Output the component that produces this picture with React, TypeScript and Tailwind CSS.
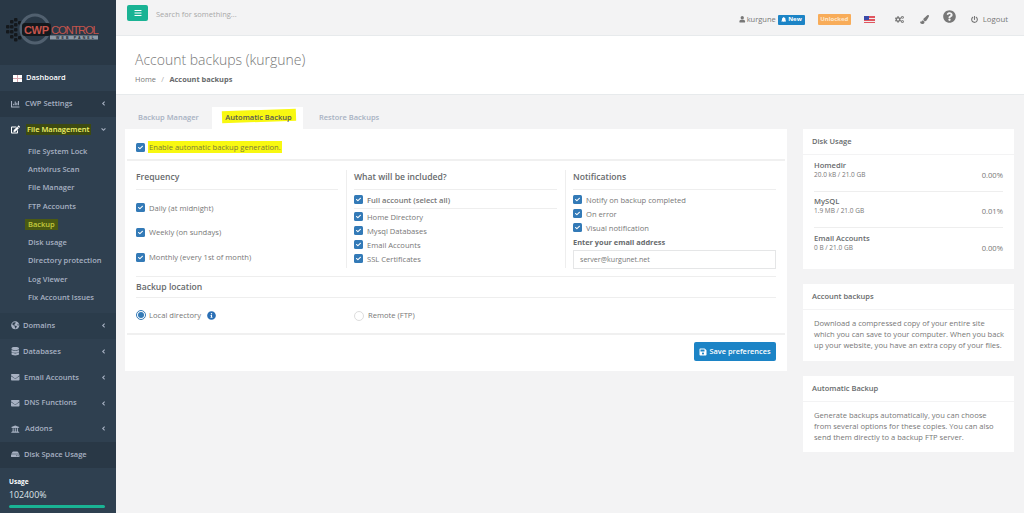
import {
  FaAngleDown,
  FaAngleLeft,
  FaBars,
  FaBell,
  FaChartBar,
  FaCheck,
  FaCogs,
  FaDatabase,
  FaEdit,
  FaEnvelope,
  FaGlobeAmericas,
  FaHdd,
  FaInfoCircle,
  FaPaintBrush,
  FaPowerOff,
  FaQuestionCircle,
  FaSave,
  FaUniversity,
  FaUser,
} from 'react-icons/fa'
import type { ReactNode } from 'react'

function Logo() {
  const dots = [
    [8, 27], [8, 32], [12, 22], [12, 27], [12, 32], [12, 37], [16, 20], [16, 25], [16, 30], [16, 35], [16, 40], [20, 23], [20, 38],
  ]
  return (
    <svg width="116" height="65" viewBox="0 0 116 65" className="block">
      {dots.map(([x, y]) => (
        <rect key={`${x}-${y}`} x={x - 2} y={y - 2} width="3.5" height="3.5" rx="1" fill="#14181c" />
      ))}
      <circle cx="35" cy="29" r="14" fill="none" stroke="#51606f" strokeWidth="3" />
      <rect x="22" y="23" width="29" height="13" rx="3" fill="#14181c" />
      <text x="24" y="33.5" fontFamily="Liberation Sans, sans-serif" fontSize="11" fontWeight="700" fill="#c4544c" textLength="25">CWP</text>
      <text x="51" y="33.5" fontFamily="Liberation Sans, sans-serif" fontSize="11.5" fill="#c4544c" textLength="48">CONTROL</text>
      <rect x="50" y="35.5" width="48" height="4" fill="#8d99a6" />
      <text x="56" y="39" fontFamily="Liberation Sans, sans-serif" fontSize="3.5" fontWeight="700" fill="#1d2730" textLength="38">WEB PANEL</text>
    </svg>
  )
}

function NavRow({ icon, label, arrow, tone, gap = 'gap-[4px]' }: { icon: ReactNode; label: string; arrow?: boolean; tone?: string; gap?: string }) {
  return (
    <div className={`flex h-[25.8px] items-center pl-[11px] pr-[9px] text-[7.5px] font-semibold text-[#a7b1c2] ${tone ?? ''}`}>
      <span className={`flex items-center ${gap}`}>
        <span className="flex w-[9px] justify-center text-[8.5px]">{icon}</span>
        {label}
      </span>
      {arrow && <FaAngleLeft className="ml-auto text-[7px]" />}
    </div>
  )
}

function SubItem({ label, marked }: { label: string; marked?: boolean }) {
  return (
    <div className="flex h-[18.25px] items-center pl-[28px] text-[7.5px] font-semibold text-[#a7b1c2]">
      {marked ? <span className="-ml-[3px] bg-[#4b5a12] px-[3px] text-[#c5cb3d]">{label}</span> : label}
    </div>
  )
}

function Sidebar() {
  return (
    <aside className="flex h-[513px] w-[116px] shrink-0 flex-col bg-[#2f4050]">
      <div className="h-[65px] shrink-0 bg-[#293846]">
        <Logo />
      </div>
      <div className="flex h-[26px] items-center gap-[4px] pl-[13px] text-[7.5px] font-semibold text-white">
        <svg width="9" height="7" viewBox="0 0 9 7">
          <rect width="9" height="7" fill="#d9a5ad" />
          <rect width="4" height="3" fill="#fff" />
          <rect x="5" width="4" height="3" fill="#fff" />
          <rect y="4" width="4" height="3" fill="#fff" />
          <rect x="5" y="4" width="4" height="3" fill="#fff" />
        </svg>
        Dashboard
      </div>
      <NavRow icon={<FaChartBar />} label="CWP Settings" arrow tone="bg-[#293846]" gap="gap-[5px]" />
      <div className="flex h-[25px] items-center pl-[11px] pr-[9px] text-[7.5px] font-semibold text-white">
        <span className="flex items-center gap-[6px]">
          <span className="flex w-[9px] justify-center text-[9px]"><FaEdit /></span>
          <span className="bg-[#3d4a10] px-[1px] text-[#f3f56b]">File Management</span>
        </span>
        <FaAngleDown className="ml-auto text-[7px] text-[#a7b1c2]" />
      </div>
      <div className="flex h-[171px] shrink-0 flex-col pt-[0.5px]">
        <SubItem label="File System Lock" />
        <SubItem label="Antivirus Scan" />
        <SubItem label="File Manager" />
        <SubItem label="FTP Accounts" />
        <SubItem label="Backup" marked />
        <SubItem label="Disk usage" />
        <SubItem label="Directory protection" />
        <SubItem label="Log Viewer" />
        <SubItem label="Fix Account Issues" />
      </div>
      <NavRow icon={<FaGlobeAmericas />} label="Domains" arrow tone="bg-[#2b3c4b]" gap="gap-[3px]" />
      <NavRow icon={<FaDatabase />} label="Databases" arrow gap="gap-[3px]" />
      <NavRow icon={<FaEnvelope />} label="Email Accounts" arrow />
      <NavRow icon={<FaEnvelope />} label="DNS Functions" arrow />
      <NavRow icon={<FaUniversity />} label="Addons" arrow gap="gap-[5px]" />
      <NavRow icon={<FaHdd />} label="Disk Space Usage" tone="bg-[#293846]" />
      <div className="flex-1 pt-[9.5px] pl-[9px] pr-[11px] text-white">
        <div className="text-[6.5px] font-bold leading-[10px]">Usage</div>
        <div className="mt-[2px] text-[8.8px] leading-[12px] text-[#dfe4e9]">102400%</div>
        <div className="mt-[4px] h-[3px] rounded-sm bg-[#1ab394]" />
      </div>
    </aside>
  )
}

function TopBar() {
  return (
    <header className="flex h-[36px] shrink-0 items-start border-b border-[#e7eaec] bg-[#f3f3f4] pl-[11px] pr-[16px]">
      <div className="mt-[5px] flex h-[16px] w-[21px] items-center justify-center rounded-[2px] bg-[#1ab394] text-[8px] text-white">
        <FaBars />
      </div>
      <span className="ml-[8px] mt-[9px] text-[7.5px] leading-[10px] text-[#a8a8a8]">Search for something...</span>
      <div className="ml-auto flex h-[36px] items-center pt-[3px] text-[7.8px] text-[#777]">
        <FaUser className="text-[6.5px]" />
        <span className="ml-[1px] text-[7.5px]">kurgune</span>
        <span className="ml-[2px] flex h-[10px] w-[27px] items-center justify-center gap-[2px] rounded-[1px] bg-[#1c84c6] text-[6px] font-bold text-white">
          <FaBell className="text-[5.5px]" />New
        </span>
        <span className="ml-[13px] flex h-[11px] w-[33px] items-center justify-center rounded-[1px] bg-[#f8ac59] text-[6px] font-bold text-[#fde7cd]">Unlocked</span>
        <svg width="11" height="7" viewBox="0 0 11 7" className="ml-[13px]">
          <rect width="11" height="7" fill="#e0555f" />
          <rect y="2" width="11" height="1" fill="#eee" />
          <rect y="5" width="11" height="1" fill="#eee" />
          <rect width="5" height="4" fill="#3b4aa8" />
        </svg>
        <FaCogs className="ml-[20px] text-[9px]" />
        <FaPaintBrush className="ml-[16px] text-[9px]" />
        <FaQuestionCircle className="ml-[14px] -mt-[6px] text-[13px]" />
        <FaPowerOff className="ml-[15px] text-[7px]" />
        <span className="ml-[5px]">Logout</span>
      </div>
    </header>
  )
}

function Check({ label, bold }: { label: ReactNode; bold?: boolean }) {
  return (
    <label className={`flex items-center gap-[4px] text-[7.6px] text-[#777] ${bold ? 'font-semibold text-[#676a6c]' : ''}`}>
      <span className="flex h-[9px] w-[9px] shrink-0 items-center justify-center rounded-[1.5px] bg-[#337ab7] text-[5px] text-white">
        <FaCheck />
      </span>
      {label}
    </label>
  )
}

function ColTitle({ children }: { children: ReactNode }) {
  return <h3 className="border-b border-[#eee] pb-[5px] text-[8.6px] font-semibold leading-[14px] text-[#676a6c]">{children}</h3>
}

function AutomaticBackup() {
  return (
    <section className="h-[242px] bg-white px-[2px] text-[#676a6c]">
      <div className="flex h-[32px] items-center gap-[3px] border-b-2 border-[#f0f0f0] pt-[6px] pl-[9px]">
        <span className="flex h-[9px] w-[9px] items-center justify-center rounded-[1.5px] bg-[#337ab7] text-[5px] text-white">
          <FaCheck />
        </span>
        <span className="bg-[#f8f811] px-[1px] text-[7.6px] leading-[12px] text-[#7b7b3a]">Enable automatic backup generation.</span>
      </div>
      <div className="flex pt-[9px] pl-[9px] pr-[9px]">
        <div className="h-[98px] w-[202px]">
          <ColTitle>Frequency</ColTitle>
          <div className="flex flex-col gap-[14.8px] pt-[12.5px] leading-[10px]">
            <Check label="Daily (at midnight)" />
            <Check label="Weekly (on sundays)" />
            <Check label="Monthly (every 1st of month)" />
          </div>
        </div>
        <div className="ml-[8px] h-[98px] w-[211px] border-l border-[#eee] pl-[7px]">
          <ColTitle>What will be included?</ColTitle>
          <div className="border-b border-[#eee] pt-[4.5px] pb-[3px] leading-[10px]">
            <Check label="Full account (select all)" bold />
          </div>
          <div className="flex flex-col gap-[4px] pt-[3px] leading-[10px]">
            <Check label="Home Directory" />
            <Check label="Mysql Databases" />
            <Check label="Email Accounts" />
            <Check label="SSL Certificates" />
          </div>
        </div>
        <div className="ml-[8px] h-[98px] flex-1 border-l border-[#eee] pl-[7px]">
          <ColTitle>Notifications</ColTitle>
          <div className="flex flex-col gap-[4px] pt-[4.5px] leading-[10px]">
            <Check label="Notify on backup completed" />
            <Check label="On error" />
            <Check label="Visual notification" />
          </div>
          <div className="mt-[4px] text-[7.4px] font-bold leading-[10px]">Enter your email address</div>
          <div className="mt-[3px] flex h-[19px] items-center border border-[#e5e6e7] pl-[6px] text-[7.1px] text-[#777]">server@kurgunet.net</div>
        </div>
      </div>
      <div className="mx-[9px] mt-[8px] border-t border-[#eee] pt-[3px]">
        <h3 className="border-b border-[#eee] pb-[3px] text-[8.6px] font-semibold leading-[14px]">Backup location</h3>
        <div className="flex h-[35px] items-center text-[7.6px] text-[#777]">
          <div className="flex w-[218px] items-center">
            <span className="flex h-[10px] w-[10px] items-center justify-center rounded-full border border-[#337ab7]">
              <span className="h-[6px] w-[6px] rounded-full bg-[#337ab7]" />
            </span>
            <span className="ml-[3px]">Local directory</span>
            <FaInfoCircle className="ml-[6px] text-[9px] text-[#2a6fb5]" />
          </div>
          <span className="h-[10px] w-[10px] rounded-full border border-[#ddd]" />
          <span className="ml-[4px]">Remote (FTP)</span>
        </div>
      </div>
      <div className="flex h-[37px] items-start justify-end border-t-2 border-[#f0f0f0] pt-[7px] pr-[9px]">
        <button className="flex h-[19px] w-[82px] items-center justify-center gap-[2px] rounded-[2px] bg-[#1c84c6] text-[7.4px] font-semibold text-white">
          <FaSave className="text-[8px]" />
          Save preferences
        </button>
      </div>
    </section>
  )
}

function Panel({ title, children, height }: { title: string; children: ReactNode; height: string }) {
  return (
    <section className={`bg-white ${height}`}>
      <h4 className="flex h-[26px] items-center border-b border-[#f3f3f4] pl-[9px] text-[7.5px] font-semibold text-[#676a6c]">{title}</h4>
      {children}
    </section>
  )
}

function DiskRow({ name, used, pct, last }: { name: string; used: string; pct: string; last?: boolean }) {
  return (
    <div className={`flex h-[36px] items-end pb-[11px] ${last ? '' : 'border-b border-[#eee]'} text-[#777]`}>
      <div>
        <div className="text-[7.6px] font-semibold leading-[10px] text-[#676a6c]">{name}</div>
        <div className="text-[6.5px] leading-[10px]">{used}</div>
      </div>
      <span className="ml-auto text-[7.6px] leading-[10px]">{pct}</span>
    </div>
  )
}

function RightColumn() {
  return (
    <aside className="ml-[16px] flex w-[211px] shrink-0 flex-col gap-[15px] pt-[34px]">
      <Panel title="Disk Usage" height="h-[140px]">
        <div className="px-[11px] pt-[1px]">
          <DiskRow name="Homedir" used="20.0 kB / 21.0 GB" pct="0.00%" />
          <DiskRow name="MySQL" used="1.9 MB / 21.0 GB" pct="0.01%" />
          <DiskRow name="Email Accounts" used="0 B / 21.0 GB" pct="0.00%" last />
        </div>
      </Panel>
      <Panel title="Account backups" height="h-[77px]">
        <p className="pt-[8px] pr-[8px] pl-[11px] text-[7.6px] leading-[10.8px] text-[#777]">
          Download a compressed copy of your entire site which you can save to your computer. When you back up your website, you have an extra copy of your files.
        </p>
      </Panel>
      <Panel title="Automatic Backup" height="h-[76px]">
        <p className="pt-[8px] pr-[18px] pl-[11px] text-[7.6px] leading-[10.8px] text-[#777]">
          Generate backups automatically, you can choose from several options for these copies. You can also send them directly to a backup FTP server.
        </p>
      </Panel>
    </aside>
  )
}

export default function App() {
  return (
    <div className="flex h-[513px] w-[1024px] overflow-hidden bg-[#f3f3f4] font-['Open_Sans',sans-serif]">
      <Sidebar />
      <main className="flex min-w-0 flex-1 flex-col">
        <TopBar />
        <div className="h-[59px] shrink-0 border-b border-[#e7eaec] bg-white pl-[19px] pt-[14px]">
          <h1 className="text-[14px] font-light leading-[20px] text-[#777]">Account backups (kurgune)</h1>
          <div className="mt-[3px] text-[7.4px] leading-[12px] text-[#777]">
            Home <span className="mx-[3.5px] text-[#aaa]">/</span> <strong className="font-bold text-[#676a6c]">Account backups</strong>
          </div>
        </div>
        <div className="flex pl-[9px]">
          <div className="w-[662px] shrink-0">
            <div className="flex h-[34px] items-end text-[7.5px] font-semibold text-[#a7b1c2]">
              <div className="flex h-[22px] w-[87px] items-center pl-[13px]">Backup Manager</div>
              <div className="relative flex h-[22px] w-[91px] items-center justify-center bg-white pl-[2px] text-[#555]">
                <span className="absolute left-[10px] top-[3px] h-[12px] w-[74px] -rotate-2 bg-[#f8f811]" />
                <span className="relative">Automatic Backup</span>
              </div>
              <div className="flex h-[22px] items-center pl-[16px]">Restore Backups</div>
            </div>
            <AutomaticBackup />
          </div>
          <RightColumn />
        </div>
      </main>
    </div>
  )
}
